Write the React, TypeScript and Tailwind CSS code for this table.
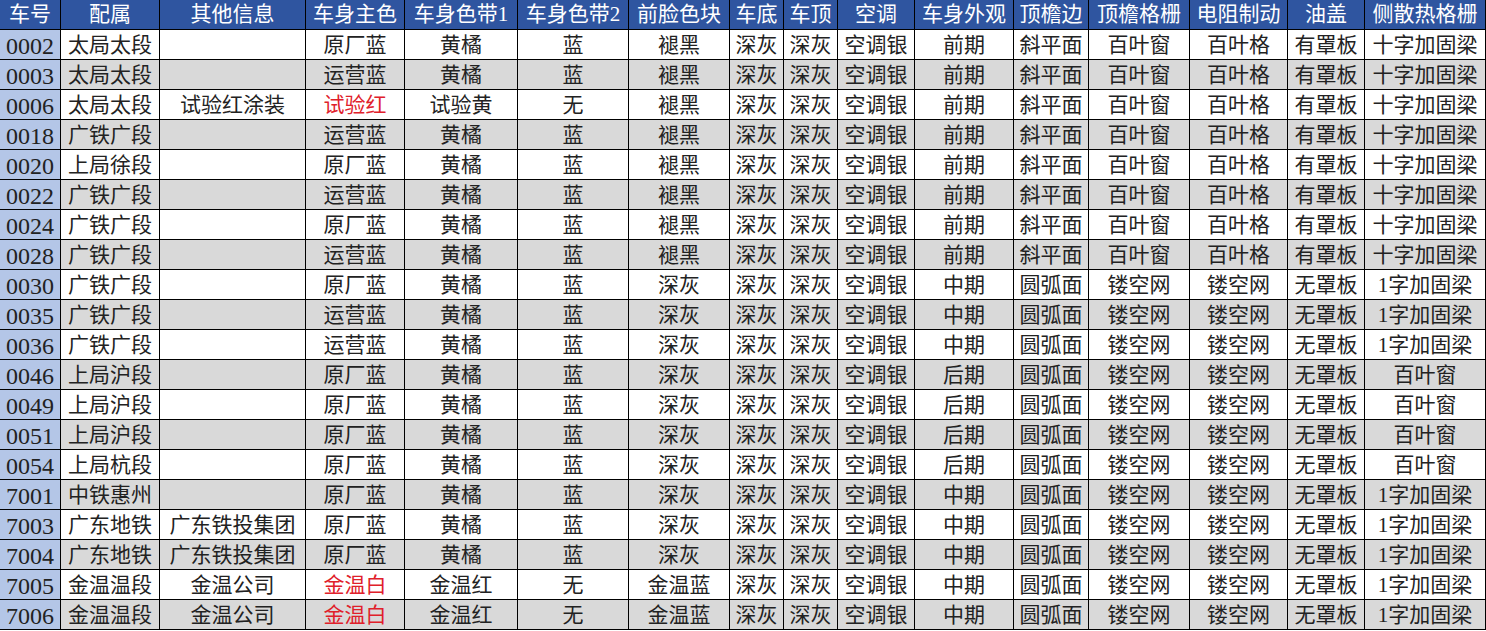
import React from 'react';

const HEADERS = [
  '车号', '配属', '其他信息', '车身主色', '车身色带1', '车身色带2', '前脸色块', '车底', '车顶',
  '空调', '车身外观', '顶檐边', '顶檐格栅', '电阻制动', '油盖', '侧散热格栅',
];

const EARLY = ['褪黑', '深灰', '深灰', '空调银', '前期', '斜平面', '百叶窗', '百叶格', '有罩板', '十字加固梁'];
const MID = ['深灰', '深灰', '深灰', '空调银', '中期', '圆弧面', '镂空网', '镂空网', '无罩板', '1字加固梁'];
const LATE = ['深灰', '深灰', '深灰', '空调银', '后期', '圆弧面', '镂空网', '镂空网', '无罩板', '百叶窗'];
const BAND = ['黄橘', '蓝'];

const ROWS: string[][] = [
  ['0002', '太局太段', '', '原厂蓝', ...BAND, ...EARLY],
  ['0003', '太局太段', '', '运营蓝', ...BAND, ...EARLY],
  ['0006', '太局太段', '试验红涂装', '试验红', '试验黄', '无', ...EARLY],
  ['0018', '广铁广段', '', '运营蓝', ...BAND, ...EARLY],
  ['0020', '上局徐段', '', '原厂蓝', ...BAND, ...EARLY],
  ['0022', '广铁广段', '', '运营蓝', ...BAND, ...EARLY],
  ['0024', '广铁广段', '', '原厂蓝', ...BAND, ...EARLY],
  ['0028', '广铁广段', '', '运营蓝', ...BAND, ...EARLY],
  ['0030', '广铁广段', '', '原厂蓝', ...BAND, ...MID],
  ['0035', '广铁广段', '', '运营蓝', ...BAND, ...MID],
  ['0036', '广铁广段', '', '运营蓝', ...BAND, ...MID],
  ['0046', '上局沪段', '', '原厂蓝', ...BAND, ...LATE],
  ['0049', '上局沪段', '', '原厂蓝', ...BAND, ...LATE],
  ['0051', '上局沪段', '', '原厂蓝', ...BAND, ...LATE],
  ['0054', '上局杭段', '', '原厂蓝', ...BAND, ...LATE],
  ['7001', '中铁惠州', '', '原厂蓝', ...BAND, ...MID],
  ['7003', '广东地铁', '广东铁投集团', '原厂蓝', ...BAND, ...MID],
  ['7004', '广东地铁', '广东铁投集团', '原厂蓝', ...BAND, ...MID],
  ['7005', '金温温段', '金温公司', '金温白', '金温红', '无', '金温蓝', ...MID.slice(1)],
  ['7006', '金温温段', '金温公司', '金温白', '金温红', '无', '金温蓝', ...MID.slice(1)],
];

const RED = ['试验红', '金温白'];

const GRID =
  'grid grid-cols-[61px_99px_146px_99px_113px_111px_101px_54px_54px_77px_99px_75px_101px_98px_77px_121px]';

export default function App() {
  return (
    <div
      className="w-[1486px] h-[631px] overflow-hidden bg-white text-[21px] leading-none"
      style={{fontFamily: '"Liberation Serif", "Noto Sans CJK SC", serif'}}
    >
      <div className={`${GRID} h-[30px] bg-[#2f55a0] text-white`}>
        {HEADERS.map((h, i) => (
          <div
            key={i}
            className="flex items-center justify-center border-r border-b border-black whitespace-nowrap"
          >
            {h}
          </div>
        ))}
      </div>
      {ROWS.map((row, r) => (
        <div
          key={r}
          className={`${GRID} h-[30px] ${r % 2 === 0 ? 'bg-white' : 'bg-[#d9d9d9]'} text-[#222]`}
        >
          {row.map((cell, c) => (
            <div
              key={c}
              className={`flex items-center justify-center pt-[2px] border-r border-b border-black whitespace-nowrap ${
                c === 0 ? 'bg-[#b4c6e7] text-[24px]' : ''
              } ${c === 3 && RED.includes(cell) ? 'text-[#e0202a]' : ''}`}
            >
              {cell}
            </div>
          ))}
        </div>
      ))}
    </div>
  );
}
